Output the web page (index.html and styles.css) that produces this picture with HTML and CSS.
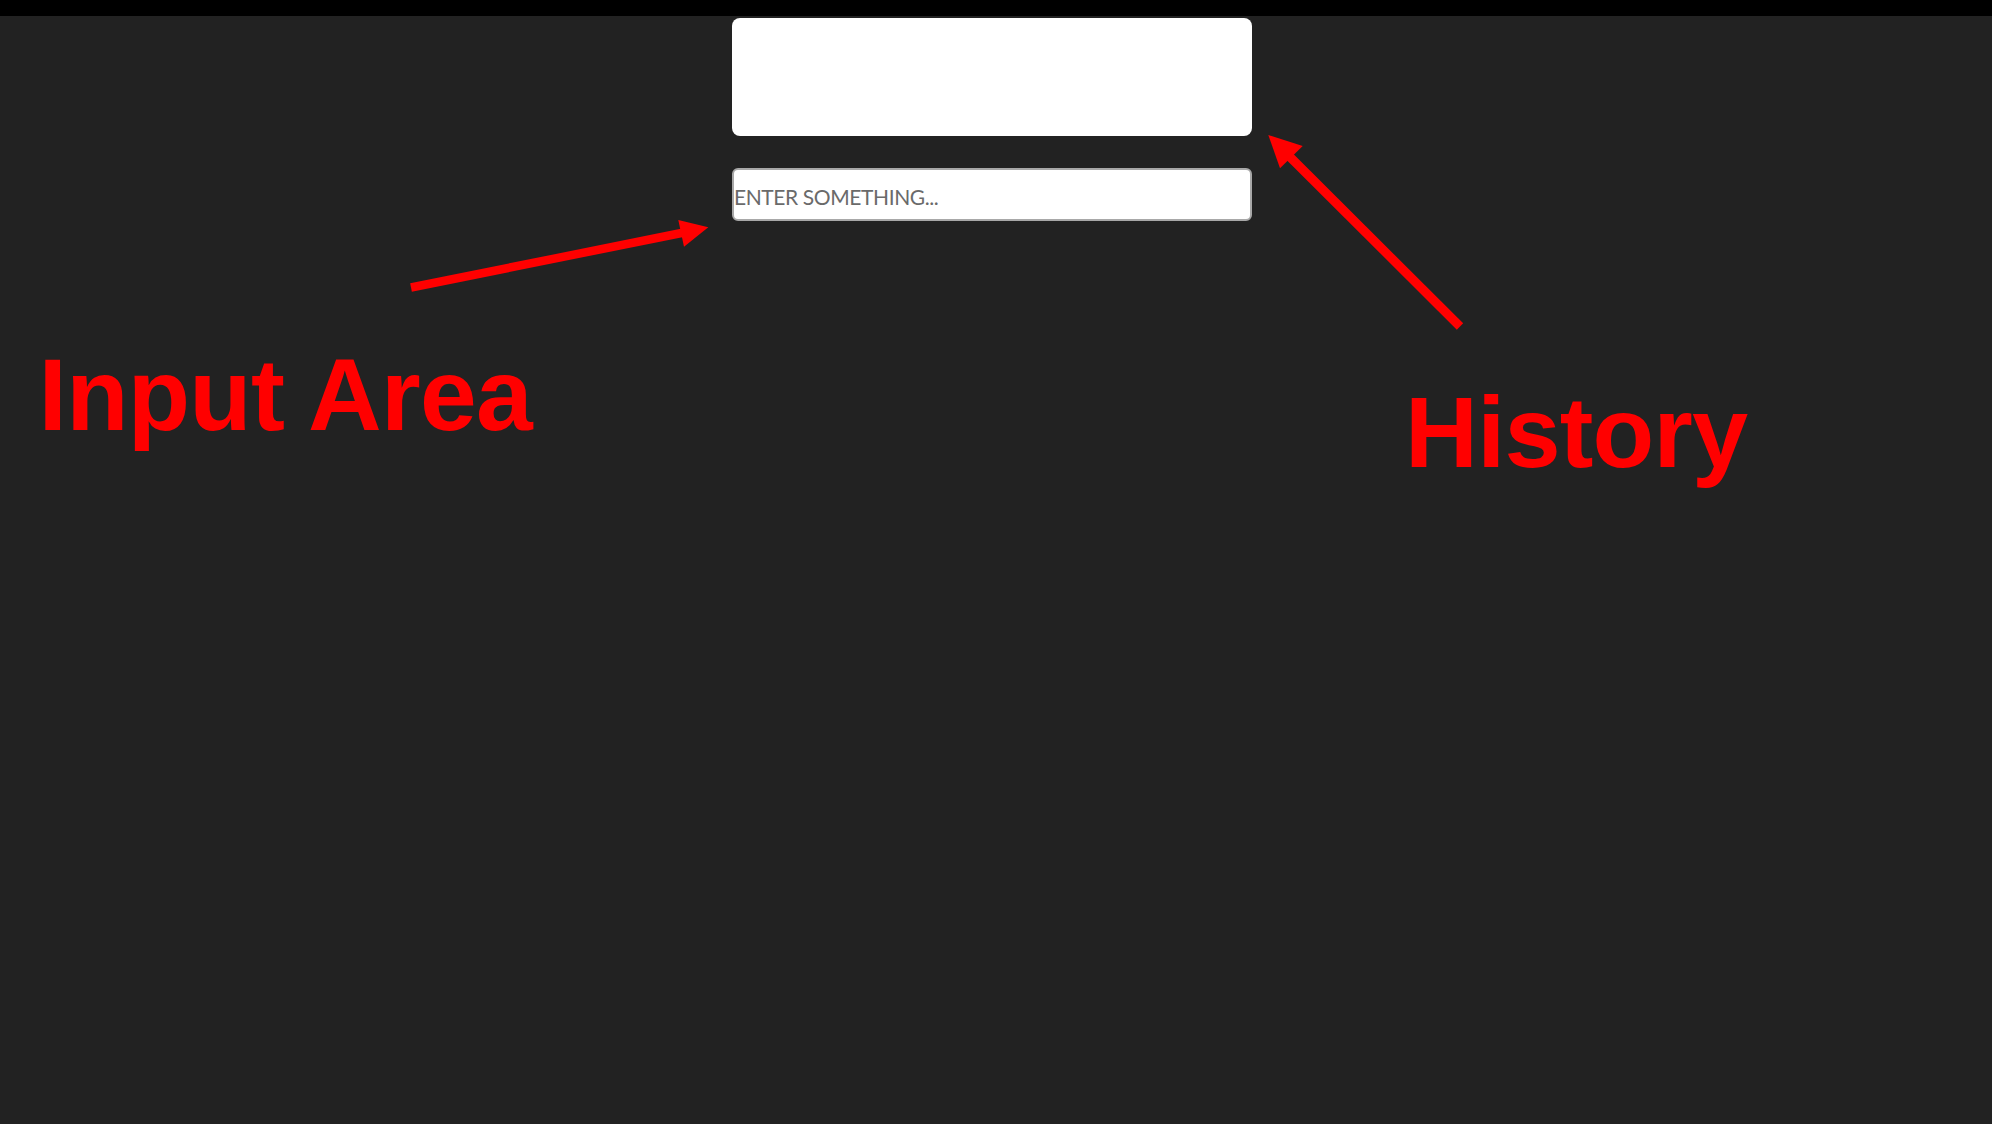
FILE: index.html
```html
<!DOCTYPE html>
<html lang="en">
<head>
<meta charset="utf-8">
<title>Console</title>
<link rel="stylesheet" href="styles.css">
</head>
<body>
  <div class="topbar"></div>
  <div class="stage">
    <main class="console">
      <div class="history"></div>
      <input class="prompt" type="text" placeholder="ENTER SOMETHING...">
    </main>
  </div>

  <svg class="annotations" width="1992" height="1124" viewBox="0 0 1992 1124" aria-hidden="true">
    <line x1="411" y1="287.5" x2="684" y2="232.5" stroke="#ff0000" stroke-width="8.5" stroke-linecap="butt"/>
    <polygon points="708.3,227.3 678.3,220 684,246.7" fill="#ff0000"/>
    <line x1="1460" y1="326.5" x2="1288" y2="155" stroke="#ff0000" stroke-width="9" stroke-linecap="butt"/>
    <polygon points="1268.3,135 1302.7,146 1280,168.3" fill="#ff0000"/>
  </svg>
  <div class="label label-input">Input Area</div>
  <div class="label label-history">History</div>
</body>
</html>
```
FILE: styles.css
```css
html, body {
  margin: 0;
  padding: 0;
  background: #222222;
  min-height: 100%;
}

body {
  position: relative;
  width: 1992px;
  height: 1124px;
  overflow: hidden;
}

.topbar {
  height: 16px;
  background: #000000;
}

.stage {
  padding-right: 8px;
  padding-top: 2px;
}

.console {
  width: 520px;
  margin: 0 auto;
  display: flex;
  flex-direction: column;
  gap: 32px;
}

.history {
  height: 118px;
  background: #ffffff;
  border-radius: 8px;
}

.prompt {
  box-sizing: border-box;
  height: 53px;
  width: 100%;
  margin: 0;
  padding: 3px 0 0 0;
  border: 2px solid #a8a8a8;
  border-radius: 6px;
  background: #ffffff;
  font-family: Lato, "Open Sans", sans-serif;
  font-size: 21px;
  letter-spacing: -0.4px;
  color: #555;
  outline: none;
}

.prompt::placeholder {
  color: #6a6a6a;
  opacity: 1;
}

.annotations {
  position: absolute;
  left: 0;
  top: 0;
  pointer-events: none;
}

.label {
  position: absolute;
  font-family: "Liberation Sans", Arial, sans-serif;
  font-weight: 700;
  color: #ff0000;
  line-height: 1;
  white-space: nowrap;
  letter-spacing: -1px;
}

.label-input {
  left: 38.5px;
  top: 343.7px;
  font-size: 102px;
  letter-spacing: -0.7px;
}

.label-history {
  left: 1405px;
  top: 381.8px;
  font-size: 101px;
  letter-spacing: -0.8px;
}
```
